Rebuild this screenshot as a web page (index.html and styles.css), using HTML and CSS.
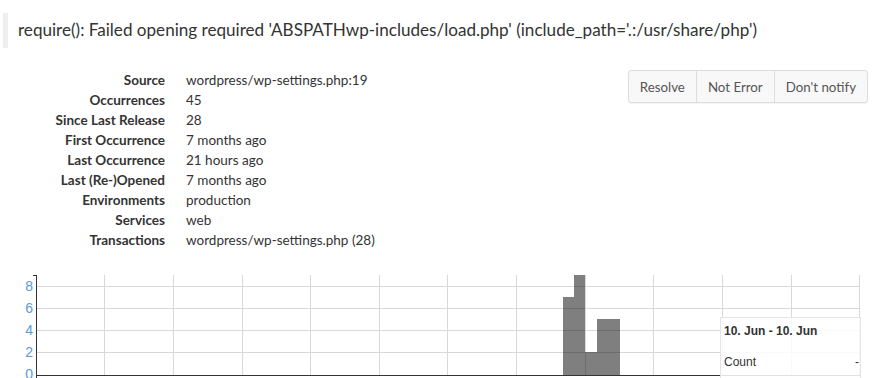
FILE: index.html
```html
<!DOCTYPE html>
<html lang="en">
<head>
    <meta charset="UTF-8">
    <meta name="viewport" content="width=device-width, initial-scale=1.0">
    <title>Error details</title>
    <link rel="stylesheet" href="styles.css">
</head>
<body>
    <blockquote class="message">require(): Failed opening required 'ABSPATHwp-includes/load.php' (include_path='.:/usr/share/php')</blockquote>

    <div class="summary">
        <dl class="details">
            <dt>Source</dt><dd>wordpress/wp-settings.php:19</dd>
            <dt>Occurrences</dt><dd>45</dd>
            <dt>Since Last Release</dt><dd>28</dd>
            <dt>First Occurrence</dt><dd>7 months ago</dd>
            <dt>Last Occurrence</dt><dd>21 hours ago</dd>
            <dt>Last (Re-)Opened</dt><dd>7 months ago</dd>
            <dt>Environments</dt><dd>production</dd>
            <dt>Services</dt><dd>web</dd>
            <dt>Transactions</dt><dd>wordpress/wp-settings.php (28)</dd>
        </dl>
        <div class="btn-group">
            <button class="btn">Resolve</button>
            <button class="btn">Not Error</button>
            <button class="btn">Don't notify</button>
        </div>
    </div>

    <div class="chart">
        <svg width="874" height="118" viewBox="0 0 874 118">
            <g class="grid">
                <line x1="36" y1="26.5" x2="860" y2="26.5"/>
                <line x1="36" y1="48.5" x2="860" y2="48.5"/>
                <line x1="36" y1="70.5" x2="860" y2="70.5"/>
                <line x1="36" y1="92.5" x2="860" y2="92.5"/>
                <line x1="104.5" y1="15" x2="104.5" y2="115"/>
                <line x1="173.5" y1="15" x2="173.5" y2="115"/>
                <line x1="242.5" y1="15" x2="242.5" y2="115"/>
                <line x1="310.5" y1="15" x2="310.5" y2="115"/>
                <line x1="379.5" y1="15" x2="379.5" y2="115"/>
                <line x1="447.5" y1="15" x2="447.5" y2="115"/>
                <line x1="516.5" y1="15" x2="516.5" y2="115"/>
                <line x1="585.5" y1="15" x2="585.5" y2="115"/>
                <line x1="653.5" y1="15" x2="653.5" y2="115"/>
                <line x1="722.5" y1="15" x2="722.5" y2="115"/>
                <line x1="791.5" y1="15" x2="791.5" y2="115"/>
                <line x1="859.5" y1="15" x2="859.5" y2="115"/>
            </g>
            <g class="bars">
                <rect x="563" y="37" width="11" height="78"/>
                <rect x="574" y="15" width="11" height="100"/>
                <rect x="585" y="92" width="12" height="23"/>
                <rect x="597" y="59" width="23" height="56"/>
            </g>
            <g class="axis">
                <line x1="36.5" y1="15" x2="36.5" y2="118"/>
                <line x1="33" y1="15.5" x2="36" y2="15.5"/>
                <line x1="36" y1="115.5" x2="860" y2="115.5"/>
                <line x1="860.5" y1="115" x2="860.5" y2="118"/>
            </g>
            <g class="labels">
                <text x="33" y="31">8</text>
                <text x="33" y="53">6</text>
                <text x="33" y="75">4</text>
                <text x="33" y="97">2</text>
                <text x="33" y="119">0</text>
            </g>
            <g class="tip">
                <rect x="720.5" y="57.5" width="140" height="62"/>
                <text class="tip-title" x="724" y="75">10. Jun - 10. Jun</text>
                <text x="724" y="106">Count</text>
                <text x="855" y="106">-</text>
            </g>
        </svg>
    </div>
</body>
</html>
```

FILE: styles.css
```css
body {
    margin: 0;
    padding: 13px 6px 0 3px;
    font-family: Lato, "Open Sans", sans-serif;
    color: #333;
    background-color: #fff;
}
.message {
    margin: 0;
    padding: 7px 0 8px 10px;
    border-left: 5px solid #eee;
    font-size: 17.1px;
    line-height: 20px;
}
.summary {
    display: flex;
    justify-content: space-between;
    align-items: flex-start;
    margin-top: 22px;
}
.details {
    display: grid;
    grid-template-columns: 162px auto;
    column-gap: 21px;
    margin: 0;
    font-size: 13.5px;
    line-height: 20px;
}
.details dt {
    font-weight: bold;
    text-align: right;
}
.details dd {
    margin: 0;
}
.btn-group {
    display: flex;
    border: 1px solid #ddd;
    border-radius: 3px;
    background-color: #f8f8f8;
    box-shadow: 0 1px 1px rgba(0, 0, 0, 0.05);
}
.btn {
    height: 31px;
    padding: 0 11px;
    border: none;
    border-left: 1px solid #ddd;
    background: none;
    font-family: Lato, "Open Sans", sans-serif;
    font-size: 13.3px;
    color: #555;
}
.btn:first-child {
    border-left: none;
}
.chart {
    margin: 10px -6px 0 -3px;
    height: 118px;
    overflow: hidden;
}
.chart svg {
    display: block;
}
.grid line {
    stroke: #d8d8d8;
    stroke-width: 1;
}
.bars rect {
    fill: rgba(0, 0, 0, 0.5);
}
.axis line {
    stroke: #333;
    stroke-width: 1;
}
.labels text {
    font-family: "Liberation Sans", Arial, sans-serif;
    font-size: 14px;
    fill: #5a9bd4;
    text-anchor: end;
}
.tip rect {
    fill: rgba(255, 255, 255, 0.85);
    stroke: #e4e4e4;
}
.tip text {
    font-family: "Liberation Sans", Arial, sans-serif;
    font-size: 12px;
    fill: #333;
}
.tip .tip-title {
    font-weight: bold;
}
```
